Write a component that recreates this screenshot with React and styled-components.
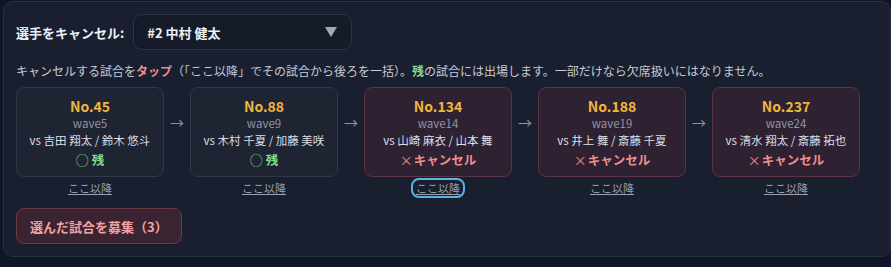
import React from 'react';
import styled, { createGlobalStyle } from 'styled-components';

const Global = createGlobalStyle`
  body {
    margin: 0;
    background: #0f1629;
    font-family: "Noto Sans CJK JP", "Noto Sans", sans-serif;
    color: #d8dbe3;
  }
`;

const Panel = styled.div`
  margin: 1px 0 0 3px;
  width: 888px;
  box-sizing: border-box;
  background: #1a1f2f;
  border: 1px solid #2a3144;
  border-radius: 10px;
  padding: 12px;
`;

const PickRow = styled.div`
  display: flex;
  align-items: center;
  gap: 9px;
`;

const Label = styled.span`
  font-size: 13px;
  font-weight: 700;
  color: #eef0f5;
`;

const Select = styled.div`
  width: 219px;
  height: 36px;
  box-sizing: border-box;
  display: flex;
  align-items: center;
  justify-content: space-between;
  padding: 0 14px 0 13px;
  background: #161b2a;
  border: 1px solid #2c3346;
  border-radius: 9px;
  font-size: 13px;
  font-weight: 700;
  color: #eef0f5;
`;

const Hint = styled.p`
  margin: 12px 0 7px;
  font-size: 12px;
  line-height: 18px;
  color: #c6cad4;
`;

const Em = styled.b`
  color: ${p => p.$tone === 'green' ? '#7edc8c' : '#f28c8c'};
`;

const Track = styled.div`
  display: flex;
  align-items: flex-start;
`;

const Arrow = styled.div`
  width: 26px;
  height: 90px;
  display: flex;
  justify-content: center;
  padding-top: 25px;
  box-sizing: border-box;
  font-size: 14px;
  color: #8d93a3;
`;

const Slot = styled.div`
  width: 148px;
  display: flex;
  flex-direction: column;
  align-items: center;
`;

const Card = styled.div`
  width: 100%;
  height: 90px;
  box-sizing: border-box;
  padding: 9px 4px 0;
  text-align: center;
  border-radius: 8px;
  background: ${p => p.$cancel ? '#2e2232' : '#1f2433'};
  border: 1px solid ${p => p.$cancel ? '#5a3444' : '#313849'};
`;

const No = styled.div`
  font-size: 14px;
  line-height: 18px;
  font-weight: 700;
  color: #f2b63c;
`;

const Wave = styled.div`
  font-size: 11.5px;
  line-height: 16px;
  color: #8e94a4;
`;

const Vs = styled.div`
  font-size: 11.5px;
  line-height: 19px;
  color: #dcdfe6;
  white-space: nowrap;
`;

const Status = styled.div`
  font-size: 12.5px;
  line-height: 20px;
  font-weight: 700;
  color: ${p => p.$cancel ? '#f28c8c' : '#7edc8c'};
`;

const Mark = styled.span`
  display: inline-block;
  margin-right: ${p => p.$cancel ? '1px' : '3px'};
  font-weight: 400;
  font-size: 13px;
`;

const After = styled.a`
  margin-top: 3px;
  padding: 0 3px;
  font-size: 11px;
  line-height: 16px;
  color: #9aa0ae;
  text-decoration: underline;
  border-radius: 6px;
  outline: ${p => p.$focus ? '2px solid #5ab4e0' : 'none'};
  outline-offset: 0;
`;

const Submit = styled.button`
  margin-top: 12px;
  height: 36px;
  padding: 0 13px;
  background: #3a2431;
  border: 1px solid #6b3a46;
  border-radius: 8px;
  font-family: inherit;
  font-size: 13px;
  font-weight: 700;
  color: #f2a2a2;
`;

const games = [
  { no: 45, wave: 5, vs: '吉田 翔太 / 鈴木 悠斗', cancel: false },
  { no: 88, wave: 9, vs: '木村 千夏 / 加藤 美咲', cancel: false },
  { no: 134, wave: 14, vs: '山崎 麻衣 / 山本 舞', cancel: true, focus: true },
  { no: 188, wave: 19, vs: '井上 舞 / 斎藤 千夏', cancel: true },
  { no: 237, wave: 24, vs: '清水 翔太 / 斎藤 拓也', cancel: true },
];

export default function App() {
  return (
    <>
      <Global />
      <Panel>
        <PickRow>
          <Label>選手をキャンセル:</Label>
          <Select>
            <span>#2 中村 健太</span>
            <svg width="12" height="10" viewBox="0 0 12 10">
              <polygon points="0,0 12,0 6,10" fill="#a3a9b7" />
            </svg>
          </Select>
        </PickRow>
        <Hint>
          キャンセルする試合を<Em>タップ</Em>（「ここ以降」でその試合から後ろを一括）。<Em $tone="green">残</Em>の試合には出場します。一部だけなら欠席扱いにはなりません。
        </Hint>
        <Track>
          {games.map((g, i) => (
            <React.Fragment key={g.no}>
              {i > 0 && <Arrow>→</Arrow>}
              <Slot>
                <Card $cancel={g.cancel}>
                  <No>No.{g.no}</No>
                  <Wave>wave{g.wave}</Wave>
                  <Vs>vs {g.vs}</Vs>
                  <Status $cancel={g.cancel}>
                    <Mark $cancel={g.cancel}>{g.cancel ? '×' : '○'}</Mark>
                    {g.cancel ? 'キャンセル' : '残'}
                  </Status>
                </Card>
                <After $focus={g.focus}>ここ以降</After>
              </Slot>
            </React.Fragment>
          ))}
        </Track>
        <Submit>選んだ試合を募集（3）</Submit>
      </Panel>
    </>
  );
}
